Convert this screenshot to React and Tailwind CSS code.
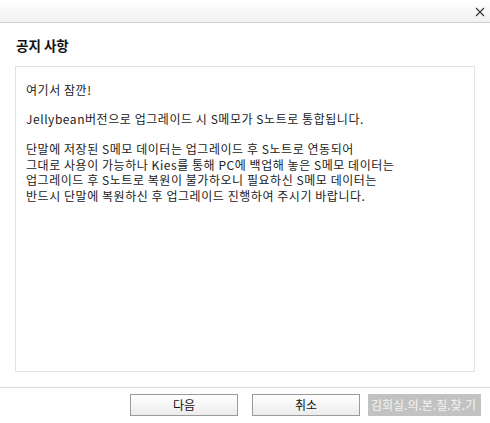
import React from "react";

const font = { fontFamily: '"Noto Sans CJK KR", "Liberation Sans", sans-serif' };

const lines = [
  "단말에 저장된 S메모 데이터는 업그레이드 후 S노트로 연동되어",
  "그대로 사용이 가능하나 Kies를 통해 PC에 백업해 놓은 S메모 데이터는",
  "업그레이드 후 S노트로 복원이 불가하오니 필요하신 S메모 데이터는",
  "반드시 단말에 복원하신 후 업그레이드 진행하여 주시기 바랍니다.",
];

const Button = ({ label }) => (
  <button className="w-[108px] h-[22px] border border-[#9a9a9a] bg-gradient-to-b from-white to-[#ececec] text-[12px] leading-none text-[#111]">
    {label}
  </button>
);

export default function App() {
  return (
    <div
      className="w-[490px] h-[423px] bg-white flex flex-col text-[#222]"
      style={font}
    >
      {/* title bar */}
      <div className="h-[23px] shrink-0 flex items-center justify-end pr-[5px] bg-gradient-to-b from-white to-[#f1f1f1] border-b border-[#cfcfcf]">
        <svg width="10" height="10" viewBox="0 0 10 10" className="mt-[1px]">
          <path d="M1 1 L9 9 M9 1 L1 9" stroke="#333" strokeWidth="1.1" />
        </svg>
      </div>

      <div className="flex-1 flex flex-col px-[15px] pb-[15px] border-b border-[#dcdcdc]">
        <h1 className="text-[13.5px] font-bold leading-none pt-[16px] pl-[1px] pb-[13px] text-[#111]">
          공지 사항
        </h1>
        <div className="flex-1 border border-[#e2e2e2] pl-[10px] pt-[15px] text-[12px] leading-[15.7px] tracking-[0.55px] text-[#222]">
          <p>여기서 잠깐!</p>
          <p className="mt-[14px]">
            Jellybean버전으로 업그레이드 시 S메모가 S노트로 통합됩니다.
          </p>
          <div className="mt-[14px]">
            {lines.map((l, i) => (
              <p key={i}>{l}</p>
            ))}
          </div>
        </div>
      </div>

      <div className="h-[35px] shrink-0 flex items-start pt-[6px] pl-[130px] gap-[14px]">
        <Button label="다음" />
        <Button label="취소" />
        <div className="w-[113px] h-[22px] ml-[-6px] bg-[#c2c2c2] text-[#f4f4f4] text-[12px] leading-[22px] pl-[3px] whitespace-nowrap overflow-hidden">
          김희실.의.본.질.찾.기
        </div>
      </div>
    </div>
  );
}
